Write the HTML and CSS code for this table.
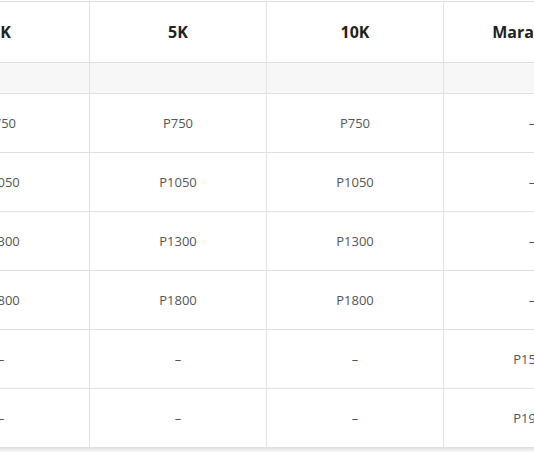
FILE: index.html
```html
<!DOCTYPE html>
<html>
<head>
<meta charset="utf-8">
<link rel="stylesheet" href="styles.css">
</head>
<body>
<div class="page">
  <div class="table-wrap">
    <table class="rates">
      <thead>
        <tr>
          <th>3K</th>
          <th>5K</th>
          <th>10K</th>
          <th>Marathon</th>
        </tr>
      </thead>
      <tbody>
        <tr class="group"><td></td><td></td><td></td><td></td></tr>
        <tr><td>P750</td><td>P750</td><td>P750</td><td>–</td></tr>
        <tr><td>P1050</td><td>P1050</td><td>P1050</td><td>–</td></tr>
        <tr><td>P1300</td><td>P1300</td><td>P1300</td><td>–</td></tr>
        <tr><td>P1800</td><td>P1800</td><td>P1800</td><td>–</td></tr>
        <tr><td>–</td><td>–</td><td>–</td><td>P1500</td></tr>
        <tr><td>–</td><td>–</td><td>–</td><td>P1900</td></tr>
      </tbody>
    </table>
  </div>
</div>
</body>
</html>
```
FILE: styles.css
```css
html, body {
  margin: 0;
  padding: 0;
}
body {
  background: #f3f3f3;
  font-family: "Open Sans", "Liberation Sans", sans-serif;
  overflow: hidden;
}
.page {
  width: 534px;
  height: 452px;
  overflow: hidden;
}
.table-wrap {
  background: #ffffff;
  padding-top: 1px;
  margin-left: -88px;
  width: 800px;
  border-bottom: 2px solid #e6e6e6;
}
.rates {
  border-collapse: collapse;
  table-layout: fixed;
}
.rates th,
.rates td {
  width: 176px;
  border: 1px solid #e1e1e1;
  padding: 0;
  text-align: center;
  vertical-align: middle;
}
.rates th {
  height: 60px;
  font-size: 16px;
  font-weight: 700;
  color: #222222;
}
.rates td {
  height: 58px;
  font-size: 13px;
  color: #555555;
}
.rates .group td {
  height: 30px;
  background: #f7f7f7;
}
```
